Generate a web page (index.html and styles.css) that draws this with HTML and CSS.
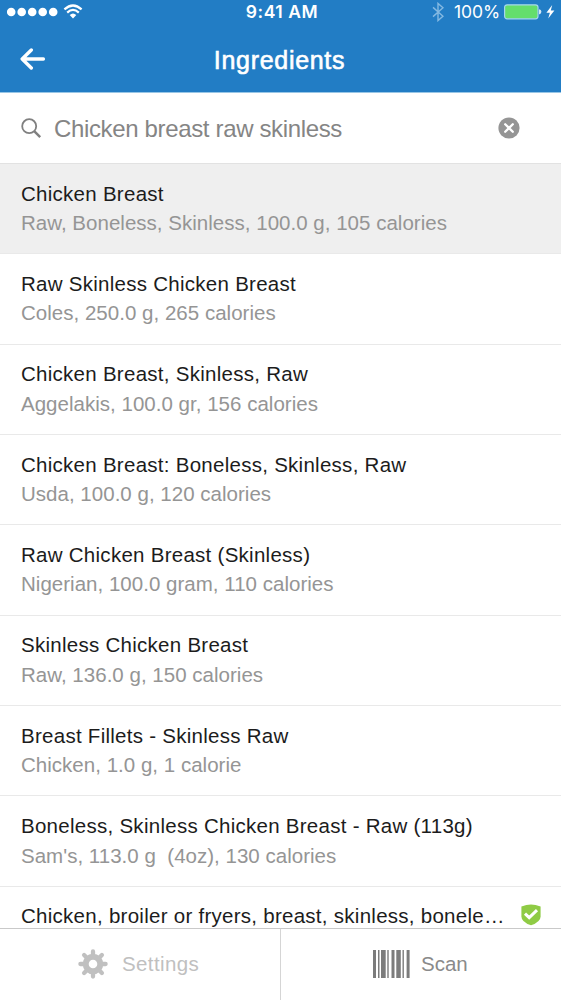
FILE: index.html
```html
<!DOCTYPE html>
<html lang="en">

<head>
    <meta charset="UTF-8">
    <meta name="viewport" content="width=device-width, initial-scale=1.0">
    <title>Ingredients</title>
    <link rel="stylesheet" href="styles.css">
</head>

<body>
    <header class="header">
        <!-- Status bar -->
        <div class="status">
            <div class="status-left">
                <svg width="52" height="10" viewBox="0 0 52 10" fill="#fff">
                    <circle cx="4.2" cy="5" r="4.3"/>
                    <circle cx="14.7" cy="5" r="4.3"/>
                    <circle cx="25.2" cy="5" r="4.3"/>
                    <circle cx="35.7" cy="5" r="4.3"/>
                    <circle cx="46.2" cy="5" r="4.3"/>
                </svg>
                <svg class="wifi" width="20" height="15" viewBox="0 0 20 15" fill="none" stroke="#fff">
                    <path d="M1.4 5.4Q10-2.4 18.6 5.4" stroke-width="2.2"/>
                    <path d="M4.2 8.6Q10 3.2 15.8 8.6" stroke-width="2.2"/>
                    <path d="M6.7 11Q10 7.8 13.3 11L10 14.4z" fill="#fff" stroke="none"/>
                </svg>
            </div>
            <span class="time">9:41 AM</span>
            <div class="status-right">
                <svg class="bluetooth" width="12" height="20" viewBox="0 0 12 20" fill="none" stroke="#84b9e2" stroke-width="1.4">
                    <path d="M1 5.4L11 14.2L6 18.6V1.4L11 5.8L1 14.6"/>
                </svg>
                <span class="percent">100%</span>
                <svg width="38" height="16" viewBox="0 0 38 16">
                    <rect x=".6" y=".8" width="33.4" height="14" rx="2.5" fill="#64de6c" stroke="#a5d5ee" stroke-width="1.2"/>
                    <path d="M35 5.2Q37.4 5.6 37.4 7.8T35 10.4z" fill="#d5e8f5"/>
                </svg>
                <svg class="bolt" width="9" height="14" viewBox="0 0 9 14" fill="#fff">
                    <path d="M6.2 0L.4 7.8H3.9L2.2 13.6L8.4 5.6H4.8z"/>
                </svg>
            </div>
        </div>

        <!-- Title bar -->
        <div class="titlebar">
            <svg class="back" width="26" height="22" viewBox="0 0 26 22" fill="none" stroke="#fff" stroke-width="3.4" stroke-linecap="round" stroke-linejoin="round">
                <path d="M11.3 2L2.2 11L11.3 20M2.6 11H23.4"/>
            </svg>
            <h1>Ingredients</h1>
        </div>
    </header>

    <div class="search">
        <svg width="21" height="21" viewBox="0 0 21 21" fill="none" stroke="#808080">
            <circle cx="8.2" cy="8.2" r="7" stroke-width="1.8"/>
            <path d="M13.2 13.2L19.2 19.2" stroke-width="2.5"/>
        </svg>
        <span class="query">Chicken breast raw skinless</span>
        <svg width="22" height="22" viewBox="0 0 22 22">
            <circle cx="11" cy="11" r="10.6" fill="#959595"/>
            <path d="M7.2 7.2L14.8 14.8M14.8 7.2L7.2 14.8" stroke="#fff" stroke-width="2.3" stroke-linecap="round"/>
        </svg>
    </div>

    <ul class="results">
        <li class="selected">
            <div class="name">Chicken Breast</div>
            <div class="info">Raw, Boneless, Skinless, 100.0 g, 105 calories</div>
        </li>
        <li>
            <div class="name">Raw Skinless Chicken Breast</div>
            <div class="info">Coles, 250.0 g, 265 calories</div>
        </li>
        <li>
            <div class="name">Chicken Breast, Skinless, Raw</div>
            <div class="info">Aggelakis, 100.0 gr, 156 calories</div>
        </li>
        <li>
            <div class="name">Chicken Breast: Boneless, Skinless, Raw</div>
            <div class="info">Usda, 100.0 g, 120 calories</div>
        </li>
        <li>
            <div class="name">Raw Chicken Breast (Skinless)</div>
            <div class="info">Nigerian, 100.0 gram, 110 calories</div>
        </li>
        <li>
            <div class="name">Skinless Chicken Breast</div>
            <div class="info">Raw, 136.0 g, 150 calories</div>
        </li>
        <li>
            <div class="name">Breast Fillets - Skinless Raw</div>
            <div class="info">Chicken, 1.0 g, 1 calorie</div>
        </li>
        <li>
            <div class="name">Boneless, Skinless Chicken Breast - Raw (113g)</div>
            <div class="info">Sam's, 113.0 g&nbsp; (4oz), 130 calories</div>
        </li>
        <li class="verified">
            <div class="name">Chicken, broiler or fryers, breast, skinless, bonele…</div>
            <svg width="20" height="22" viewBox="0 0 20 22">
                <path d="M10 .5Q14.5 .5 19.6 2.6V12.5Q19.6 18 10 21.3Q.4 18 .4 12.5V2.6Q5.5 .5 10 .5z" fill="#8fcb45"/>
                <path d="M4 9.6L8.2 13.6L16 6.2" fill="none" stroke="#fff" stroke-width="3"/>
            </svg>
        </li>
    </ul>

    <footer class="toolbar">
        <div class="tool settings">
            <svg width="30" height="30" viewBox="-15 -15 30 30" fill="none" stroke="#c0c0c0">
                <circle r="7.3" stroke-width="6"/>
                <path d="M0-9V-12.6M0 9V12.6M-9 0H-12.6M9 0H12.6M-6.5-6.5L-8.9-8.9M6.5 6.5L8.9 8.9M-6.5 6.5L-8.9 8.9M6.5-6.5L8.9-8.9" stroke-width="4.3" stroke-linecap="round"/>
            </svg>
            <span>Settings</span>
        </div>
        <div class="tool scan">
            <svg width="37" height="28" viewBox="0 0 37 28" fill="#7c7c7c">
                <path d="M0 0h3v28H0zM5 0h1.5v28H5zM8 0h4.7v28H8zM14.3 0h1.4v28h-1.4zM18.5 0h3v28h-3zM23.3 0h4.5v28h-4.5zM29.5 0h1.4v28h-1.4zM33.6 0h3v28h-3z"/>
            </svg>
            <span>Scan</span>
        </div>
    </footer>
</body>

</html>
```

FILE: styles.css
```css
* {
    box-sizing: border-box;
}

body {
    margin: 0;
    height: 1000px;
    display: flex;
    flex-direction: column;
    overflow: hidden;
    background: #fff;
    font-family: "Liberation Sans", Arial, sans-serif;
    font-size: 20.5px;
}

svg {
    display: block;
    flex: none;
}

/* header */
.header {
    flex: none;
    height: 93px;
    background: #227dc5;
    border-bottom: 1px solid #98c6e6;
    color: #fff;
}

.status {
    display: grid;
    grid-template-columns: 1fr auto 1fr;
    align-items: center;
    height: 23px;
    padding: 0 7px;
    font-family: Inter, sans-serif;
    font-size: 17.5px;
}

.status-left,
.status-right {
    display: flex;
    align-items: center;
}

.wifi {
    margin-left: 4px;
    margin-top: -1px;
}

.time {
    font-weight: 600;
    letter-spacing: 0.55px;
    padding-left: 3px;
}

.status-right {
    justify-content: flex-end;
}

.bluetooth {
    margin-right: 10px;
}

.percent {
    margin-right: 4px;
    letter-spacing: -0.1px;
}

.bolt {
    margin-left: 4px;
    margin-right: -1px;
}

.titlebar {
    display: grid;
    grid-template-columns: 60px 1fr 60px;
    align-items: center;
    height: 69px;
    padding-bottom: 4px;
}

.back {
    margin: 6px 0 0 20px;
}

h1 {
    margin: 9px 2px 0 0;
    font-size: 25px;
    font-weight: normal;
    letter-spacing: 0.7px;
    text-align: center;
    -webkit-text-stroke: 0.6px #fff;
}

/* search field */
.search {
    flex: none;
    display: flex;
    align-items: center;
    height: 71px;
    padding: 0 41px 0 21px;
    border-bottom: 1px solid #e2e2e2;
}

.query {
    flex: 1;
    margin-left: 12px;
    padding-top: 1px;
    color: #858585;
    font-size: 24px;
    letter-spacing: -0.35px;
}

/* result list */
.results {
    flex: 1;
    min-height: 0;
    margin: 0;
    padding: 0;
    overflow: hidden;
    list-style: none;
}

.results li {
    height: 90.35px;
    padding: 14.5px 20px 0 21px;
    border-bottom: 1px solid #e9e9e9;
    line-height: 29.6px;
    white-space: nowrap;
}

.results .selected {
    background: #efefef;
}

.name {
    color: #1c1c1c;
    letter-spacing: 0.27px;
}

.info {
    color: #959595;
    letter-spacing: 0.02px;
}

.results .verified {
    display: flex;
    justify-content: space-between;
}

.verified svg {
    margin-top: 3px;
}

/* bottom toolbar */
.toolbar {
    flex: none;
    display: flex;
    height: 72px;
    border-top: 1px solid #c9c9c9;
}

.tool {
    display: flex;
    align-items: center;
    height: 71px;
    padding-bottom: 2px;
}

.settings {
    width: 281px;
    padding-left: 78px;
    border-right: 1px solid #d5d5d5;
    color: #c0c0c0;
    letter-spacing: 0.4px;
}

.settings span {
    margin-left: 14px;
}

.scan {
    padding-left: 92px;
    color: #8a8a8a;
    letter-spacing: 0;
}

.scan span {
    margin-left: 11px;
}
```
